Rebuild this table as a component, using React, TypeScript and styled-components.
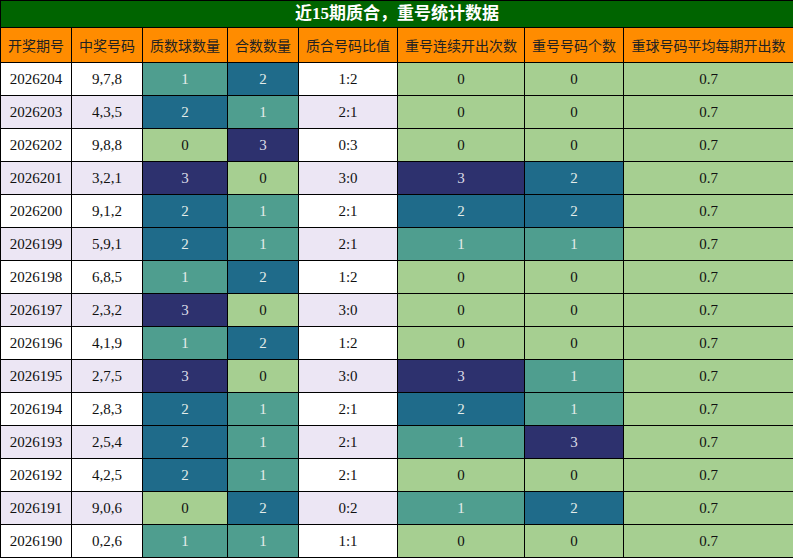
import React from "react";
import styled, { createGlobalStyle } from "styled-components";

const Global = createGlobalStyle`
  html, body { margin: 0; padding: 0; background: #ffffff; }
  body { font-family: "Liberation Serif", "Noto Sans CJK SC", serif; }
`;

const Table = styled.table`
  border-collapse: collapse;
  width: 793px;
  table-layout: fixed;
  font-family: "Liberation Serif", "Noto Sans CJK SC", serif;
  td, th { border: 1px solid #000; padding: 0; text-align: center; }
`;

const TitleCell = styled.th`
  height: 26px;
  background: #006400;
  color: #ffffff;
  font-family: "Liberation Serif", "Noto Sans CJK SC", sans-serif;
  font-weight: bold;
  font-size: 17px;
  line-height: 26px;
`;

const HeadCell = styled.th`
  height: 34px;
  background: #ff8c00;
  color: #222;
  font-weight: normal;
  font-size: 14px;
  font-family: "Noto Sans CJK SC", sans-serif;
  white-space: nowrap;
`;

const Cell = styled.td<{ $alt?: boolean }>`
  height: 32px;
  font-size: 15px;
  color: #111;
  background: ${(p) => (p.$alt ? "#ece6f4" : "#ffffff")};
`;

const palette: Record<number, { bg: string; fg: string }> = {
  0: { bg: "#a6cf91", fg: "#111" },
  1: { bg: "#4f9e8f", fg: "#e4ece9" },
  2: { bg: "#1f6b8a", fg: "#e4ece9" },
  3: { bg: "#2d316e", fg: "#dcdde8" },
};

const HeatCell = styled.td<{ $v: number }>`
  height: 32px;
  font-size: 15px;
  background: ${(p) => palette[p.$v].bg};
  color: ${(p) => palette[p.$v].fg};
`;

const AvgCell = styled.td`
  height: 32px;
  font-size: 15px;
  background: #a6cf91;
  color: #111;
`;

const widths = [71, 71, 85, 71, 99, 127, 99, 170];
const headers = [
  "开奖期号",
  "中奖号码",
  "质数球数量",
  "合数数量",
  "质合号码比值",
  "重号连续开出次数",
  "重号号码个数",
  "重球号码平均每期开出数",
];

type Row = [string, string, number, number, string, number, number];
const rows: Row[] = [
  ["2026204", "9,7,8", 1, 2, "1:2", 0, 0],
  ["2026203", "4,3,5", 2, 1, "2:1", 0, 0],
  ["2026202", "9,8,8", 0, 3, "0:3", 0, 0],
  ["2026201", "3,2,1", 3, 0, "3:0", 3, 2],
  ["2026200", "9,1,2", 2, 1, "2:1", 2, 2],
  ["2026199", "5,9,1", 2, 1, "2:1", 1, 1],
  ["2026198", "6,8,5", 1, 2, "1:2", 0, 0],
  ["2026197", "2,3,2", 3, 0, "3:0", 0, 0],
  ["2026196", "4,1,9", 1, 2, "1:2", 0, 0],
  ["2026195", "2,7,5", 3, 0, "3:0", 3, 1],
  ["2026194", "2,8,3", 2, 1, "2:1", 2, 1],
  ["2026193", "2,5,4", 2, 1, "2:1", 1, 3],
  ["2026192", "4,2,5", 2, 1, "2:1", 0, 0],
  ["2026191", "9,0,6", 0, 2, "0:2", 1, 2],
  ["2026190", "0,2,6", 1, 1, "1:1", 0, 0],
];

export default function App() {
  return (
    <>
      <Global />
      <Table>
        <colgroup>
          {widths.map((w, i) => (
            <col key={i} style={{ width: w }} />
          ))}
        </colgroup>
        <thead>
          <tr>
            <TitleCell colSpan={8}>近15期质合，重号统计数据</TitleCell>
          </tr>
          <tr>
            {headers.map((h) => (
              <HeadCell key={h}>{h}</HeadCell>
            ))}
          </tr>
        </thead>
        <tbody>
          {rows.map((r, i) => {
            const alt = i % 2 === 1;
            return (
              <tr key={r[0]}>
                <Cell $alt={alt}>{r[0]}</Cell>
                <Cell $alt={alt}>{r[1]}</Cell>
                <HeatCell $v={r[2]}>{r[2]}</HeatCell>
                <HeatCell $v={r[3]}>{r[3]}</HeatCell>
                <Cell $alt={alt}>{r[4]}</Cell>
                <HeatCell $v={r[5]}>{r[5]}</HeatCell>
                <HeatCell $v={r[6]}>{r[6]}</HeatCell>
                <AvgCell>0.7</AvgCell>
              </tr>
            );
          })}
        </tbody>
      </Table>
    </>
  );
}
